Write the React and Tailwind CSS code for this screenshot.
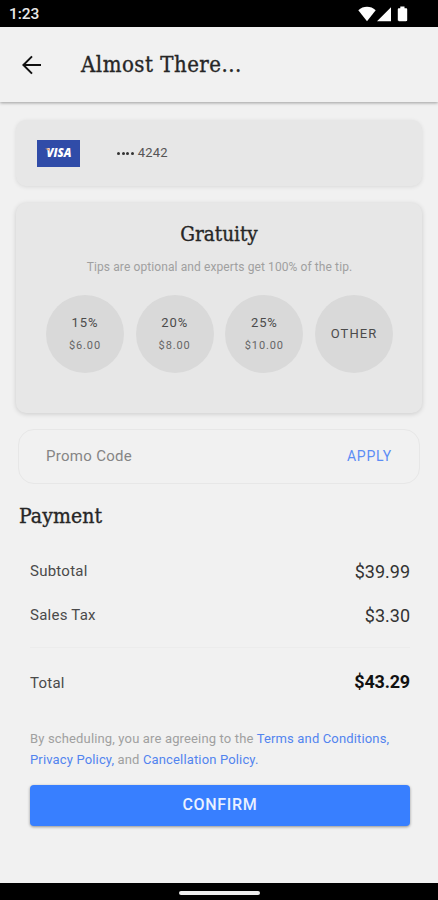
const SLAB =
  "font-['Roboto_Slab','DejaVu_Serif_Condensed','DejaVu_Serif',serif] [font-stretch:condensed] [-webkit-text-stroke:0.35px_#262626] whitespace-nowrap";

const tips = [
  { label: '15%', amount: '$6.00' },
  { label: '20%', amount: '$8.00' },
  { label: '25%', amount: '$10.00' },
];

function StatusBar() {
  return (
    <div className="flex h-[27px] shrink-0 items-center justify-between bg-black pr-[29px] pl-[9px] text-white">
      <span className="pt-[2px] text-[15.5px] leading-none font-medium tracking-[-0.1px] text-[#e8e8e8]">1:23</span>
      <svg width="51" height="16" viewBox="0 0 51 16" fill="#fff">
        <path d="M0.3 4.2C5.2-0.3 12.8-0.3 17.7 4.2L9 15.2Z" />
        <path d="M33 1.3V15.3H19Z" />
        <path d="M42.3 2.2V0.6H46.5V2.2H48C48.8 2.2 49.2 2.7 49.2 3.4V14.1C49.2 14.9 48.8 15.3 48 15.3H41C40.2 15.3 39.8 14.9 39.8 14.1V3.4C39.8 2.7 40.2 2.2 41 2.2Z" />
      </svg>
    </div>
  );
}

function Header() {
  return (
    <header className="flex h-[75px] shrink-0 items-center bg-[#f1f1f1] pl-[22px] shadow-[0_1px_3px_rgba(0,0,0,0.35)]">
      <svg width="20" height="20" viewBox="0 0 20 20" fill="none" stroke="#111" strokeWidth="2">
        <path d="M19 10H1.6M10 1.4L1.4 10L10 18.6" />
      </svg>
      <h1 className={`${SLAB} ml-[39px] text-[22px] leading-7 tracking-[0.5px] text-[#262626]`}>Almost There...</h1>
    </header>
  );
}

function Row({ label, value, bold }) {
  return (
    <div className="flex h-[46px] items-center justify-between">
      <span className="-mt-[2px] text-[15px] tracking-[0.25px] text-[#4a4a4a]">{label}</span>
      <span className={bold ? '-mt-[4px] text-lg font-bold tracking-[-0.2px] text-[#111]' : 'text-lg text-[#333]'}>{value}</span>
    </div>
  );
}

export default function App() {
  return (
    <div className="flex h-[900px] w-[438px] flex-col overflow-hidden bg-[#f1f1f1] font-['Roboto',sans-serif]">
      <StatusBar />
      <Header />
      <main className="flex flex-1 flex-col">
        <section className="mx-4 mt-[18px] flex h-[66px] items-center rounded-[10px] bg-[#e7e7e7] pl-[21px] shadow-[0_1px_4px_rgba(0,0,0,0.1)]">
          <div className="flex h-[27px] w-[43px] items-center justify-center bg-[#304ca8]">
            <svg width="30" height="20" viewBox="0 0 30 20" className="overflow-visible">
              <text x="2.5" y="14" textLength="25" lengthAdjust="spacingAndGlyphs" fill="#fff" fontFamily="Open Sans, sans-serif" fontSize="11.5" fontWeight="800" fontStyle="italic">VISA</text>
              <path d="M1.6 5.6H4.8L5.9 8.8C4.9 7.4 3.4 6.3 1.6 5.9Z" fill="#e5a269" />
            </svg>
          </div>
          <div className="ml-[37px] flex items-center gap-1">
            <span className="flex gap-[1.6px]">
              {[0, 1, 2, 3].map((i) => (
                <i key={i} className="size-[3px] rounded-full bg-[#333]" />
              ))}
            </span>
            <span className="text-[13px] tracking-[0.2px] text-[#555]">4242</span>
          </div>
        </section>

        <section className="mx-4 mt-[17px] flex h-[210px] flex-col items-center rounded-[10px] bg-[#e7e7e7] shadow-[0_1px_5px_rgba(0,0,0,0.16)]">
          <h2 className={`${SLAB} mt-[17px] text-[20.5px] leading-7 text-[#262626]`}>Gratuity</h2>
          <p className="mt-[9px] ml-px text-xs leading-5 tracking-[0.1px] whitespace-nowrap text-[#a0a0a0]">
            Tips are optional and experts get 100% of the tip.
          </p>
          <div className="mt-[18px] ml-[1px] flex gap-[11.7px]">
            {tips.map((tip) => (
              <button key={tip.label} className="flex size-[78px] flex-col items-center rounded-full bg-[#d9d9d9] pt-[18px]">
                <span className="text-[13px] leading-5 tracking-[0.9px] text-[#4b4b4b]">{tip.label}</span>
                <span className="mt-[4px] text-[11px] leading-[18px] tracking-[0.9px] text-[#666]">{tip.amount}</span>
              </button>
            ))}
            <button className="size-[78px] rounded-full bg-[#d9d9d9] text-[13px] tracking-[1.1px] text-[#4b4b4b]">OTHER</button>
          </div>
        </section>

        <section className="mr-[18px] ml-[18px] mt-[16px] flex h-[55px] items-center justify-between rounded-2xl border border-[#e7e7e7] pr-[27px] pl-[27px]">
          <span className="text-[15px] tracking-[0.3px] text-[#858585]">Promo Code</span>
          <button className="-mt-[2px] text-sm tracking-[0.8px] text-[#5c8df5]">APPLY</button>
        </section>

        <h2 className={`${SLAB} mt-[18px] ml-[19px] text-[21px] leading-7 tracking-[0.1px] text-[#262626]`}>Payment</h2>

        <div className="mr-[28px] ml-[30px] mt-[19px]">
          <Row label="Subtotal" value="$39.99" />
          <div className="-mt-[2px]">
            <Row label="Sales Tax" value="$3.30" />
          </div>
          <div className="mt-2 mb-[13px] h-px bg-[#ececec]" />
          <Row label="Total" value="$43.29" bold />
        </div>

        <p className="mt-[21px] ml-[30px] text-[13px] leading-[21px] tracking-[0.15px] whitespace-nowrap text-[#a0a0a0]">
          By scheduling, you are agreeing to the <a className="text-[#5284ef]">Terms and Conditions,</a>
          <br />
          <a className="text-[#5284ef]">Privacy Policy,</a> and <a className="text-[#5284ef]">Cancellation Policy.</a>
        </p>

        <button className="mr-[28px] ml-[30px] mt-[15px] h-[41px] rounded bg-[#387fff] pb-[2px] text-base font-medium tracking-[0.7px] text-[#eaf1ff] shadow-[0_1px_3px_rgba(0,0,0,0.4)]">
          CONFIRM
        </button>
      </main>
      <footer className="flex h-[17px] shrink-0 items-center justify-center bg-black">
        <div className="mt-[2px] h-1 w-[81px] rounded-full bg-[#eee]" />
      </footer>
    </div>
  );
}
